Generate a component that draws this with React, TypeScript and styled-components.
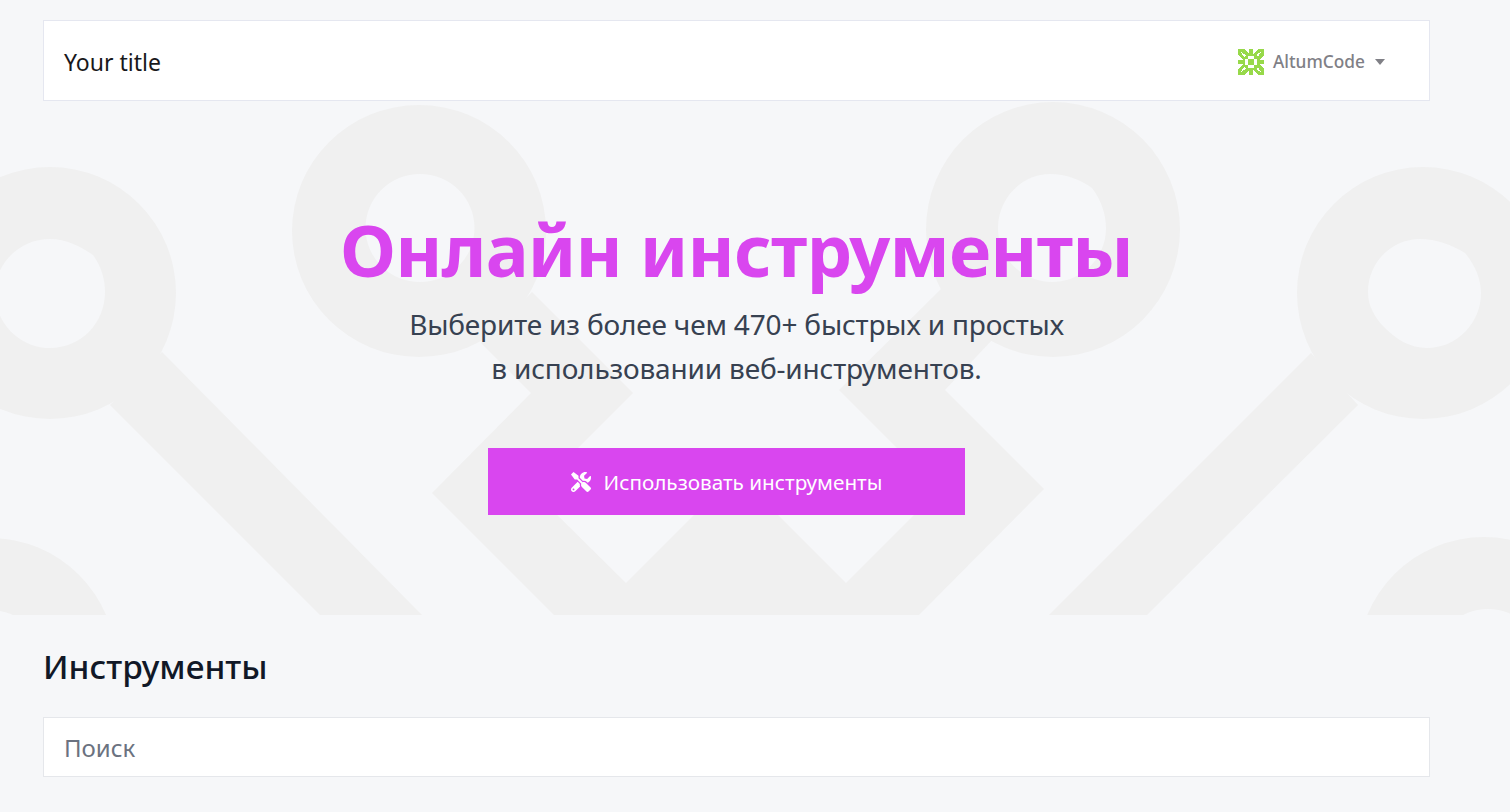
import React from 'react';
import styled, { createGlobalStyle } from 'styled-components';
import { FaTools } from 'react-icons/fa';

const Global = createGlobalStyle`
  html, body { margin: 0; padding: 0; background: #f6f7f9; }
  body { font-family: "Noto Sans", "Open Sans", sans-serif; overflow: hidden; }
`;
const Page = styled.div`position: relative; width: 1510px; height: 812px; overflow: hidden; padding-top: 20px; box-sizing: border-box;`;
const Backdrop = styled.svg`position: absolute; left: 0; top: 0; width: 1510px; height: 615px;`;
const Container = styled.div`position: relative; width: 1387px; margin-left: 43px;`;
const Navbar = styled.header`height: 81px; box-sizing: border-box; background: #fff; border: 1px solid #e5e7f0; display: flex; align-items: center; justify-content: space-between; padding: 0 44px 0 20px;`;
const Brand = styled.div`font-size: 23px; line-height: 32px; margin-top: 2px; color: #18181b;`;
const User = styled.div`display: flex; align-items: center; margin-top: 3px; font-size: 17.3px; line-height: 26px; font-weight: 500; color: #808086;`;
const Avatar = styled.svg`width: 26px; height: 26px; margin-right: 9px;`;
const Caret = styled.span`width: 0; height: 0; margin-left: 10px; border: 5.5px solid transparent; border-top: 6px solid #808086; border-bottom: 0;`;
const Hero = styled.section`display: flex; flex-direction: column; align-items: center; padding-top: 105px; height: 514px; box-sizing: border-box;`;
const Title = styled.h1`margin: 0; font-size: 72px; line-height: 86px; font-weight: 700; letter-spacing: -0.8px; color: #d946ef;`;
const Lead = styled.p`margin: 10px 0 0; font-size: 28px; line-height: 44px; letter-spacing: -0.17px; color: #374151; text-align: center;`;
const Cta = styled.a`margin: 58px 20px 0 0; width: 477px; height: 67px; background: #d946ef; color: #fff; display: flex; align-items: center; justify-content: center; gap: 13px; font-size: 20.7px; line-height: 28px;`;
const Heading = styled.h2`margin: 26px 0 0; font-size: 33.4px; line-height: 50px; font-weight: 500; color: #111827;`;
const Search = styled.input`display: block; margin-top: 26px; width: 100%; height: 60px; box-sizing: border-box; background: #fff; border: 1px solid #e5e7eb; padding: 0 20px; font: 24px "Noto Sans", sans-serif; outline: none; &::placeholder { color: #6b7280; opacity: 1; }`;

const Quadrant = () => (
  <g fill="#fff">
    <polygon points="6,0 11,0 11,5" />
    <polygon points="0,6 0,11 5,11" />
    <polygon points="3,3 8,6 6,8" />
    <rect x="10" y="7" width="3" height="3" />
    <rect x="7" y="10" width="3" height="3" />
  </g>
);

export default function App() {
  return (
    <Page>
      <Global />
      <Backdrop viewBox="0 0 1510 615">
        <g fill="#f0f0f0" fillRule="evenodd">
          <path d="M50 167a126 126 0 1 1 0 252a126 126 0 1 1 0-252zM50 239C66 239 80 246 93 255C101 266 105 279 105 292C105 323 81 348 50 348C20 348 -5 323 -5 293C-5 263 20 239 50 239Z" />
          <polygon points="162,352 422,615 320,615 110,405" />
          <path d="M419 105a127 126 0 1 1 0 252a127 126 0 1 1 0-252zM420 174a54.500 54 0 1 0 0 108a54.500 54 0 1 0 0-108z" />
          <path d="M1053 102a127 127.500 0 1 1 0 255a127 127.500 0 1 1 0-255zM1050 174C1066 174 1081 180 1092 188C1101 200 1106 214 1106 228C1106 258 1082 282 1052 282C1022 282 998 258 998 228C998 198 1022 174 1050 174Z" />
          <polygon points="532,292 633,393 534,492 626,583 736,473 846,583 939,490 839,390 942,288 993,339 945,390 1044,489 919,615 554,615 432,493 531,393 481,343" />
          <path d="M1423 167a126 126 0 1 1 0 252a126 126 0 1 1 0-252zM1420 239C1436 239 1452 245 1465 253C1475 265 1481 279 1481 293C1481 323 1457 348 1427 348C1410 348 1396 339 1385 328C1375 318 1368 306 1368 292C1368 262 1392 239 1420 239Z" />
          <polygon points="1311,353 1049,615 1147,615 1358,405" />
          <path d="M-10 538a126 126 0 1 1 0 252a126 126 0 1 1 0-252zM-10 610a54 54 0 1 0 0 108a54 54 0 1 0 0-108z" />
          <path d="M1484 537a126.500 126.500 0 1 1 0 253a126.500 126.500 0 1 1 0-253zM1488 609a54 54 0 1 0 0 108a54 54 0 1 0 0-108z" />
        </g>
      </Backdrop>
      <Container>
        <Navbar>
          <Brand>Your title</Brand>
          <User>
            <Avatar viewBox="0 0 26 26" shapeRendering="crispEdges">
              <rect width="26" height="26" fill="#97d94a" />
              <Quadrant />
              <g transform="rotate(90 13 13)"><Quadrant /></g>
              <g transform="rotate(180 13 13)"><Quadrant /></g>
              <g transform="rotate(270 13 13)"><Quadrant /></g>
            </Avatar>
            AltumCode
            <Caret />
          </User>
        </Navbar>
        <Hero>
          <Title>Онлайн инструменты</Title>
          <Lead>Выберите из более чем 470+ быстрых и простых<br />в использовании веб-инструментов.</Lead>
          <Cta><FaTools size={20} />Использовать инструменты</Cta>
        </Hero>
        <Heading>Инструменты</Heading>
        <Search placeholder="Поиск" />
      </Container>
    </Page>
  );
}
